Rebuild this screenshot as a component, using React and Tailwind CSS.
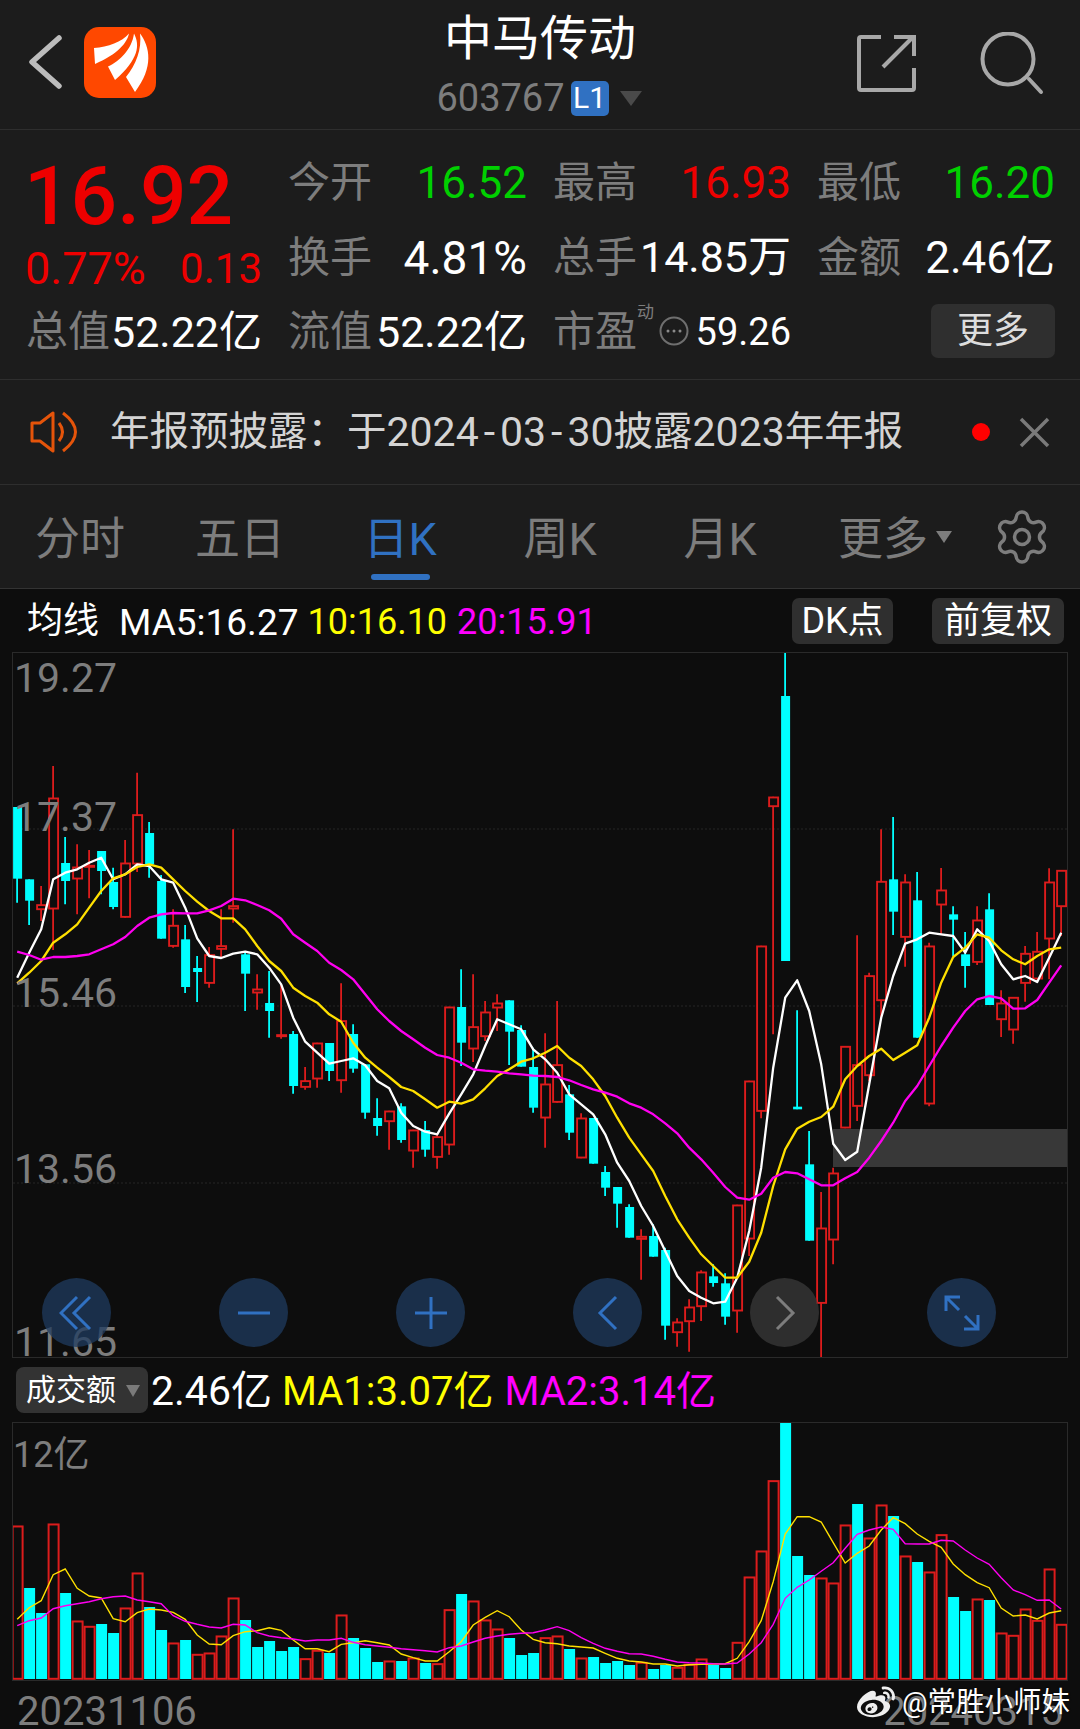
import { Settings } from "lucide-react";
import { FaWeibo } from "react-icons/fa";

// candles: [colour, high, body top, body bottom, low] in zoom units, y = 650 + z / 3
const candles = [
  ["c", 468, 468, 683, 755], ["c", 685, 685, 749, 822], ["r", 705, 760, 777, 810], ["r", 345, 440, 775, 897],
  ["c", 558, 636, 690, 760], ["r", 580, 647, 685, 790], ["r", 597, 642, 650, 742], ["c", 600, 600, 660, 730],
  ["c", 650, 693, 768, 775], ["r", 567, 635, 800, 800], ["r", 365, 490, 640, 663], ["c", 513, 546, 640, 680],
  ["c", 672, 690, 863, 863], ["r", 775, 822, 887, 890], ["c", 822, 865, 1008, 1026], ["c", 915, 951, 963, 1053],
  ["r", 888, 910, 998, 1010], ["r", 775, 883, 896, 920], ["r", 535, 763, 775, 815], ["c", 905, 910, 968, 1080],
  ["r", 970, 1013, 1027, 1076], ["c", 960, 1056, 1080, 1160], ["r", 1000, 1150, 1158, 1163], ["c", 1140, 1149, 1305, 1328],
  ["r", 1248, 1288, 1310, 1316], ["r", 1175, 1175, 1285, 1310], ["c", 1176, 1176, 1260, 1290], ["r", 997, 1108, 1290, 1325],
  ["c", 1120, 1149, 1253, 1265], ["c", 1240, 1240, 1385, 1403], ["c", 1342, 1401, 1425, 1454], ["r", 1379, 1379, 1413, 1496],
  ["c", 1357, 1366, 1467, 1475], ["r", 1436, 1436, 1501, 1550], ["c", 1410, 1437, 1496, 1517], ["r", 1450, 1456, 1520, 1553],
  ["r", 1067, 1067, 1483, 1511], ["c", 955, 1068, 1175, 1245], ["r", 970, 1126, 1195, 1233], ["r", 1050, 1082, 1158, 1170],
  ["r", 1030, 1055, 1072, 1140], ["c", 1048, 1048, 1142, 1242], ["c", 1123, 1137, 1247, 1247], ["c", 1190, 1248, 1370, 1385],
  ["r", 1147, 1298, 1402, 1490], ["r", 1050, 1240, 1355, 1355], ["c", 1302, 1330, 1445, 1467], ["r", 1387, 1400, 1522, 1522],
  ["c", 1401, 1401, 1538, 1538], ["c", 1545, 1563, 1610, 1635], ["c", 1608, 1608, 1658, 1730], ["c", 1660, 1668, 1760, 1760],
  ["r", 1735, 1755, 1766, 1886], ["c", 1720, 1755, 1817, 1817], ["c", 1790, 1797, 2024, 2066], ["r", 2002, 2012, 2046, 2087],
  ["r", 1945, 1967, 2013, 2102], ["r", 1858, 1862, 1968, 2010], ["c", 1840, 1876, 1896, 1907], ["c", 1867, 1897, 1997, 2021],
  ["r", 1661, 1661, 1981, 2045], ["r", 1289, 1289, 1765, 1815], ["r", 884, 884, 1382, 1402], ["r", 437, 437, 468, 1150],
  ["c", 5, 135, 930, 930], ["c", 1078, 1367, 1375, 1375], ["c", 1440, 1540, 1769, 1769], ["r", 1623, 1730, 1958, 2122],
  ["r", 1550, 1565, 1768, 1840], ["r", 1185, 1185, 1432, 1432], ["r", 853, 1240, 1367, 1410], ["r", 965, 973, 1275, 1290],
  ["r", 535, 690, 1050, 1100], ["c", 498, 685, 782, 852], ["r", 670, 692, 860, 947], ["c", 663, 748, 1160, 1160],
  ["r", 875, 884, 1360, 1366], ["r", 651, 716, 763, 850], ["c", 766, 790, 806, 915], ["c", 843, 910, 945, 1010],
  ["r", 766, 806, 935, 942], ["c", 727, 775, 1062, 1062], ["r", 1018, 1055, 1107, 1158], ["r", 1038, 1038, 1138, 1178],
  ["r", 885, 906, 998, 1052], ["r", 843, 900, 985, 985], ["r", 652, 692, 865, 985], ["r", 657, 657, 768, 855],
];

const ma5 = [
  980, 905, 835, 685, 665, 655, 635, 620, 685, 670, 640, 645, 685, 695, 770, 862, 915, 921, 908, 902, 910, 950,
  1000, 1100, 1172, 1205, 1238, 1230, 1222, 1243, 1290, 1312, 1385, 1425, 1442, 1450, 1388, 1330, 1270, 1185, 1105,
  1120, 1135, 1195, 1225, 1265, 1330, 1360, 1390, 1450, 1535, 1590, 1665, 1725, 1800, 1875, 1920, 1940, 1957, 1952,
  1880, 1740, 1550, 1250, 1040, 988, 1080, 1240, 1478, 1527, 1502, 1300, 1100, 975, 878, 865, 845, 850, 855, 905,
  835, 870, 940, 985, 975, 993, 920, 845,
];
const ma10 = [
  997, 965, 930, 875, 850, 820, 770, 720, 682, 670, 648, 640, 650, 685, 720, 752, 780, 802, 802, 835, 885, 930, 960,
  1010, 1035, 1055, 1090, 1112, 1175, 1220, 1250, 1278, 1308, 1320, 1345, 1370, 1352, 1358, 1345, 1312, 1275, 1255,
  1232, 1222, 1205, 1185, 1220, 1245, 1285, 1335, 1400, 1460, 1510, 1560, 1635, 1705, 1760, 1810, 1845, 1880, 1880,
  1832, 1745, 1605, 1495, 1433, 1412, 1398, 1367, 1285, 1245, 1215, 1193, 1227, 1205, 1183, 1100, 995, 918, 890, 850,
  860, 898, 925, 940, 915, 895, 890,
];
const ma20 = [
  902, 912, 926, 918, 918, 915, 910, 895, 880, 858, 825, 800, 790, 786, 787, 787, 778, 765, 743, 748, 762, 778, 803,
  850, 875, 900, 935, 957, 985, 1030, 1075, 1110, 1140, 1165, 1190, 1212, 1220, 1235, 1255, 1259, 1262, 1267, 1270,
  1274, 1275, 1278, 1288, 1302, 1315, 1325, 1337, 1357, 1370, 1390, 1417, 1447, 1490, 1525, 1565, 1608, 1640, 1646,
  1628, 1580, 1563, 1567, 1585, 1603, 1603, 1582, 1563, 1520, 1470, 1415, 1350, 1305, 1245, 1185, 1130, 1080, 1045,
  1035, 1042, 1073, 1072, 1047, 995, 943,
];

// volume bars: top of each bar, y = 1380 + z / 3
const volTops = [
  437, 624, 699, 431, 639, 722, 738, 732, 759, 683, 578, 681, 750, 788, 780, 822, 818, 767, 653, 720, 801, 783, 813,
  801, 835, 810, 819, 704, 774, 804, 846, 842, 843, 833, 849, 850, 688, 642, 662, 719, 746, 774, 825, 819, 772, 767,
  807, 833, 831, 849, 843, 855, 846, 867, 855, 861, 852, 836, 855, 864, 786, 590, 512, 301, 125, 528, 585, 593, 608,
  434, 372, 473, 374, 408, 527, 546, 575, 463, 651, 693, 656, 660, 758, 765, 686, 720, 566, 732,
];
const volKinds = [
  "r", "c", "c", "r", "c", "r", "r", "c", "c", "r", "r", "c", "c", "r", "c", "r", "r", "r", "r", "c", "c", "c",
  "c", "c", "r", "r", "c", "r", "c", "c", "c", "r", "c", "r", "c", "r", "r", "c", "r", "r", "r", "c", "c", "c",
  "r", "r", "c", "r", "c", "c", "c", "c", "r", "c", "c", "r", "r", "r", "c", "c", "r", "r", "r", "r", "c", "c",
  "c", "r", "r", "r", "c", "r", "r", "c", "r", "c", "r", "r", "c", "c", "r", "c", "r", "r", "r", "r", "r", "r",
];
const volMa1 = [
  718, 683, 662, 584, 567, 625, 648, 654, 716, 725, 698, 687, 690, 697, 718, 765, 792, 794, 767, 755, 752, 743, 751,
  780, 806, 806, 815, 793, 788, 782, 788, 795, 822, 833, 843, 843, 815, 785, 735, 712, 692, 710, 750, 778, 788, 791,
  798, 801, 804, 820, 835, 843, 846, 852, 852, 858, 854, 853, 852, 851, 835, 785, 722, 605, 462, 410, 410, 426, 488,
  549, 520, 498, 450, 413, 431, 462, 484, 502, 552, 584, 608, 623, 684, 708, 705, 717, 699, 692,
];
const volMa2 = [
  737, 722, 714, 686, 677, 671, 665, 656, 650, 648, 660, 665, 671, 707, 724, 733, 741, 744, 733, 735, 758, 768, 773,
  777, 783, 780, 780, 775, 787, 794, 798, 802, 806, 809, 812, 816, 803, 798, 786, 775, 768, 763, 760, 758, 750, 740,
  752, 773, 790, 805, 814, 821, 822, 829, 838, 846, 848, 849, 851, 852, 849, 822, 788, 733, 655, 622, 600, 574, 548,
  505, 463, 450, 441, 448, 491, 492, 492, 481, 483, 510, 534, 553, 593, 630, 644, 661, 660, 687,
];

const RED = "#dc1c1c";
const CYAN = "#00ffff";
const cx = (i) => 17.6 + 12 * i;
const py = (z) => 650 + z / 3;
const vy = (z) => 1380 + z / 3;
const points = (arr, fy) => arr.map((z, i) => `${(cx(i) - 0.4).toFixed(1)},${fy(z).toFixed(1)}`).join(" ");

function PriceChart() {
  return (
    <svg className="block w-full h-full" viewBox="13 652 1054 704">
      {[828, 1005, 1182].map((y) => (
        <line key={y} x1="13" x2="1067" y1={y} y2={y} stroke="#262626" strokeWidth="1" strokeDasharray="2 2" />
      ))}
      <rect x="833" y="1128" width="234" height="38" fill="#383838" />
      {candles.map(([kind, hi, top, bottom, lo], i) => {
        const x = cx(i);
        const color = kind === "r" ? RED : CYAN;
        return (
          <g key={i}>
            <line x1={x - 0.5} x2={x - 0.5} y1={py(hi)} y2={py(lo)} stroke={color} strokeWidth="1.8" />
            {kind === "r" ? (
              <rect
                x={x - 4.5}
                y={py(top) + 0.8}
                width="9"
                height={Math.max(py(bottom) - py(top) - 1.6, 1)}
                fill="#0d0d0d"
                stroke={color}
                strokeWidth="1.9"
              />
            ) : (
              <rect x={x - 4.5} y={py(top)} width="9" height={py(bottom) - py(top)} fill={color} />
            )}
          </g>
        );
      })}
      <polyline points={points(ma5, py)} fill="none" stroke="#ffffff" strokeWidth="2.3" strokeLinejoin="round" />
      <polyline points={points(ma10, py)} fill="none" stroke="#ffe000" strokeWidth="2.3" strokeLinejoin="round" />
      <polyline points={points(ma20, py)} fill="none" stroke="#ff00f0" strokeWidth="2.3" strokeLinejoin="round" />
    </svg>
  );
}

function VolumeChart() {
  const base = 1678;
  return (
    <svg className="block w-full h-full" viewBox="13 1423 1054 257">
      {volTops.map((z, i) => {
        const x = cx(i);
        const top = vy(z);
        return volKinds[i] === "r" ? (
          <rect
            key={i}
            x={x - 5}
            y={top + 0.8}
            width="10"
            height={base - top}
            fill="#0d0d0d"
            stroke={RED}
            strokeWidth="2"
          />
        ) : (
          <rect key={i} x={x - 5.5} y={top} width="11" height={base - top + 1} fill={CYAN} />
        );
      })}
      <polyline points={points(volMa1, vy)} fill="none" stroke="#ffe000" strokeWidth="1.4" />
      <polyline points={points(volMa2, vy)} fill="none" stroke="#ff00f0" strokeWidth="1.4" />
    </svg>
  );
}

function StatItem({ label, value, color = "text-white", valueSize = "text-[44px]" }) {
  return (
    <div className="flex items-center justify-between h-full whitespace-nowrap">
      <span className="text-[42px] text-[#7d7d7d]">{label}</span>
      <span className={`${valueSize} ${color}`}>{value}</span>
    </div>
  );
}

function RoundButton({ className, children }) {
  return (
    <div
      className={`absolute top-[625px] w-[69px] h-[69px] rounded-full flex items-center justify-center ${className}`}
    >
      {children}
    </div>
  );
}

function ChartIcon({ children, stroke = "#3071c2" }) {
  return (
    <svg width="36" height="36" viewBox="0 0 36 36" fill="none" stroke={stroke} strokeWidth="3">
      {children}
    </svg>
  );
}

export default function App() {
  return (
    <div className="w-[1080px] h-[1729px] overflow-hidden bg-[#1c1c1c] font-['Roboto','Noto_Sans_CJK_SC',sans-serif] font-normal leading-none">
      {/* Header */}
      <div className="relative h-[130px] border-b border-[#2e2e2e] flex items-start">
        <svg className="ml-[26px] mt-[32px]" width="40" height="60" viewBox="0 0 40 60" fill="none">
          <path d="M33 6 L6 30 L33 54" stroke="#bcbcbc" strokeWidth="5.5" strokeLinecap="round" strokeLinejoin="round" />
        </svg>
        <svg className="ml-[18px] mt-[27px]" width="72" height="71" viewBox="0 0 72 71">
          <rect width="72" height="71" rx="15" fill="#ff4800" />
          <path d="M10 21 C24 20 38 15 45 6.5 C43 16 34 27 11 37 Z" fill="#fff" />
          <path d="M50 6.5 C56 18 55 32 31 53 L24 39.5 C36 34 48 22 50 6.5 Z" fill="#fff" />
          <path d="M56 6.5 C66 20 70 40 51 65 L42 50 C52 38 58 22 56 6.5 Z" fill="#fff" />
        </svg>
        <div className="flex-1" />
        <div className="absolute left-0 right-0 top-[15px] flex flex-col items-center pointer-events-none">
          <div className="text-[48px] leading-[48px] text-white">中马传动</div>
          <div className="mt-[16px] flex items-center -translate-x-[1px]">
            <span className="text-[38px] text-[#7d7d7d]">603767</span>
            <span className="ml-[6px] w-[38px] h-[35px] rounded-[5px] bg-[#3071c2] text-white text-[30px] flex items-center justify-center">
              L1
            </span>
            <span className="ml-[11px] w-0 h-0 border-x-[11px] border-x-transparent border-t-[15px] border-t-[#4a4a4a]" />
          </div>
        </div>
        <svg className="mt-[33px]" width="60" height="60" viewBox="0 0 60 60" fill="none" stroke="#a8a8a8" strokeWidth="4">
          <path d="M24 4 H4 Q2 4 2 6 V55 Q2 57 4 57 H55 Q57 57 57 55 V35" />
          <path d="M37 4 H57 V23" />
          <path d="M26 34 L56 4" />
        </svg>
        <svg className="ml-[63px] mr-[36px] mt-[32px]" width="64" height="64" viewBox="0 0 64 64" fill="none" stroke="#a8a8a8" strokeWidth="4">
          <circle cx="28" cy="27" r="25.5" />
          <path d="M49 47 L61 60" strokeLinecap="round" />
        </svg>
      </div>

      {/* Quote */}
      <div className="h-[250px] border-b border-[#2e2e2e] pl-[26px]">
        <div className="grid grid-cols-[236px_239px_238px_238px] gap-x-[26px] grid-rows-[75px_75px_74px] pt-[15px]">
          <div className="row-span-2 flex flex-col whitespace-nowrap">
            <div className="mt-[7px] text-[82px] leading-[88px] font-medium text-[#ee0000] -ml-[2px]">16.92</div>
            <div className="mt-[7px] -ml-[1px] flex items-center justify-between leading-[44px] text-[#ee0000]">
              <span className="text-[45px]">0.77%</span>
              <span className="text-[42px]">0.13</span>
            </div>
          </div>
          <StatItem label="今开" value="16.52" color="text-[#00d000]" />
          <StatItem label="最高" value="16.93" color="text-[#ee0000]" />
          <StatItem label="最低" value="16.20" color="text-[#00d000]" />
          <StatItem label="换手" value="4.81%" valueSize="text-[46px]" />
          <StatItem label="总手" value="14.85万" valueSize="text-[43px]" />
          <StatItem label="金额" value="2.46亿" />
          <StatItem label="总值" value="52.22亿" valueSize="text-[43px]" />
          <StatItem label="流值" value="52.22亿" valueSize="text-[43px]" />
          <div className="flex items-center h-full whitespace-nowrap">
            <span className="text-[42px] text-[#7d7d7d]">市盈</span>
            <span className="self-start mt-[9px] text-[17px] text-[#7d7d7d]">动</span>
            <svg className="ml-[5px] mt-[-2px]" width="30" height="30" viewBox="0 0 30 30" fill="none">
              <circle cx="15" cy="15" r="13.5" stroke="#6f6f6f" strokeWidth="2" />
              <circle cx="9" cy="15" r="1.5" fill="#8a8a8a" />
              <circle cx="15" cy="15" r="1.5" fill="#8a8a8a" />
              <circle cx="21" cy="15" r="1.5" fill="#8a8a8a" />
            </svg>
            <span className="ml-auto text-[38px] text-white">59.26</span>
          </div>
          <div className="flex items-center justify-end">
            <div className="mt-[-2px] w-[124px] h-[54px] rounded-[7px] bg-[#2f2f2f] text-[36px] text-[#dddddd] flex items-center justify-center">
              更多
            </div>
          </div>
        </div>
      </div>

      {/* Notice */}
      <div className="h-[105px] border-b border-[#2e2e2e] flex items-center">
        <svg className="ml-[30px]" width="50" height="44" viewBox="0 0 50 44" fill="none" stroke="#e5540a" strokeWidth="3">
          <path d="M2 13 H10 L23 3 V41 L10 31 H2 Z" strokeLinejoin="round" />
          <path d="M29 13 Q36 22 29 31" />
          <path d="M33 3 Q58 22 33 41" />
        </svg>
        <span className="ml-[30px] flex items-center whitespace-nowrap text-[39.5px] text-[#d4d4d4]">
          年报预披露：于
          <span className="text-[41px]">
            2024<span className="mx-[5px]">-</span>03<span className="mx-[5px]">-</span>30
          </span>
          披露<span className="text-[41px]">2023</span>年年报
        </span>
        <span className="ml-auto w-[18px] h-[18px] rounded-full bg-[#ff0000]" />
        <svg className="ml-[29px] mr-[30px]" width="31" height="31" viewBox="0 0 31 31" fill="none" stroke="#7a7a7a" strokeWidth="3.5">
          <path d="M2 2 L29 29 M29 2 L2 29" />
        </svg>
      </div>

      {/* Tabs */}
      <div className="h-[104px] border-b border-[#333333] flex">
        <div className="w-[960px] grid grid-cols-6 pt-[29px] text-[45px] leading-[52px] text-[#7d7d7d]">
          <div className="flex justify-center">分时</div>
          <div className="flex justify-center">五日</div>
          <div className="flex flex-col items-center text-[#3071c2]">
            日K
            <div className="mt-[8px] w-[59px] h-[6px] rounded-full bg-[#3071c2]" />
          </div>
          <div className="flex justify-center">周K</div>
          <div className="flex justify-center">月K</div>
          <div className="flex items-start pl-[38px]">
            更多
            <span className="ml-[8px] mt-[17px] w-0 h-0 border-x-[8px] border-x-transparent border-t-[12px] border-t-[#7d7d7d]" />
          </div>
        </div>
        <Settings className="ml-[32px] mt-[22px]" size={60} color="#7d7d7d" strokeWidth={1.4} />
      </div>

      {/* Chart area */}
      <div className="bg-[#0d0d0d] h-[1141px]">
        <div className="h-[63px] flex items-center whitespace-nowrap text-[36px]">
          <span className="ml-[27px] text-white">均线</span>
          <span className="ml-[20px] mt-[3px] text-[37px] text-white">MA5:16.27</span>
          <span className="ml-[9px] mt-[3px] text-[#ffff00]">10:16.10</span>
          <span className="ml-[10px] mt-[3px] text-[#ff00ff]">20:15.91</span>
          <div className="ml-auto w-[101px] h-[46px] rounded-[7px] bg-[#2f2f2f] text-white flex items-center justify-center">
            DK点
          </div>
          <div className="ml-[39px] mr-[16px] w-[132px] h-[46px] rounded-[7px] bg-[#2f2f2f] text-white flex items-center justify-center">
            前复权
          </div>
        </div>

        <div className="relative ml-[12px] w-[1056px] h-[706px] border border-[#2a2a2a]">
          <PriceChart />
          <span className="absolute left-[1px] top-[5px] text-[41px] leading-[40px] text-[#7d7d7d]">19.27</span>
          <span className="absolute left-[1px] top-[144px] text-[41px] leading-[40px] text-[#7d7d7d]">17.37</span>
          <span className="absolute left-[1px] top-[320px] text-[41px] leading-[40px] text-[#7d7d7d]">15.46</span>
          <span className="absolute left-[1px] top-[496px] text-[41px] leading-[40px] text-[#7d7d7d]">13.56</span>
          <span className="absolute left-[1px] top-[669px] text-[41px] leading-[40px] text-[#7d7d7d]">11.65</span>
          <RoundButton className="left-[29px] bg-[#1f3b5f]/75">
            <ChartIcon>
              <path d="M18 2 L2 18 L18 34 M31 2 L15 18 L31 34" />
            </ChartIcon>
          </RoundButton>
          <RoundButton className="left-[206px] bg-[#1f3b5f]/75">
            <ChartIcon>
              <path d="M2 18 H34" />
            </ChartIcon>
          </RoundButton>
          <RoundButton className="left-[383px] bg-[#1f3b5f]/75">
            <ChartIcon>
              <path d="M2 18 H34 M18 2 V34" />
            </ChartIcon>
          </RoundButton>
          <RoundButton className="left-[560px] bg-[#1f3b5f]/75">
            <ChartIcon>
              <path d="M26 2 L10 18 L26 34" />
            </ChartIcon>
          </RoundButton>
          <RoundButton className="left-[737px] bg-[#3a3a3a]/75">
            <ChartIcon stroke="#7d7d7d">
              <path d="M10 2 L26 18 L10 34" />
            </ChartIcon>
          </RoundButton>
          <RoundButton className="left-[914px] bg-[#1f3b5f]/75">
            <svg width="36" height="36" viewBox="0 0 36 36" fill="none" stroke="#3071c2" strokeWidth="3">
              <path d="M2 16 V2 H16 M3 3 L15 15 M34 20 V34 H20 M33 33 L21 21" />
            </svg>
          </RoundButton>
        </div>

        {/* Volume */}
        <div className="h-[64px] flex items-center whitespace-nowrap text-[40px]">
          <div className="ml-[16px] w-[132px] h-[46px] rounded-[8px] bg-[#333333] text-[30px] text-white flex items-center pl-[10px]">
            成交额
            <span className="ml-[10px] mt-[2px] w-0 h-0 border-x-[7px] border-x-transparent border-t-[12px] border-t-[#7a7a7a]" />
          </div>
          <span className="ml-[3px] mt-[3px] text-[41px] text-white">2.46亿</span>
          <span className="ml-[10px] mt-[3px] text-[#ffff00]">MA1:3.07亿</span>
          <span className="ml-[11px] mt-[3px] text-[#ff00ff]">MA2:3.14亿</span>
        </div>

        <div className="relative ml-[12px] w-[1056px] h-[259px] border border-[#2a2a2a]">
          <VolumeChart />
          <span className="absolute left-[0px] top-[12px] text-[36px] leading-[40px] text-[#7d7d7d]">12亿</span>
        </div>

        <div className="relative h-[48px] pt-[11px] flex justify-between text-[40px] leading-[40px] text-[#7d7d7d]">
          <span className="ml-[17px]">20231106</span>
          <span className="mr-[17px]">20240315</span>
          <div className="absolute left-[857px] top-[3px] flex items-center text-[28.5px] leading-[36px] text-white [text-shadow:0_0_2px_#000]">
            <FaWeibo size={38} color="#efefef" />
            <span className="ml-[7px]">@常胜小师妹</span>
          </div>
        </div>
      </div>
    </div>
  );
}
